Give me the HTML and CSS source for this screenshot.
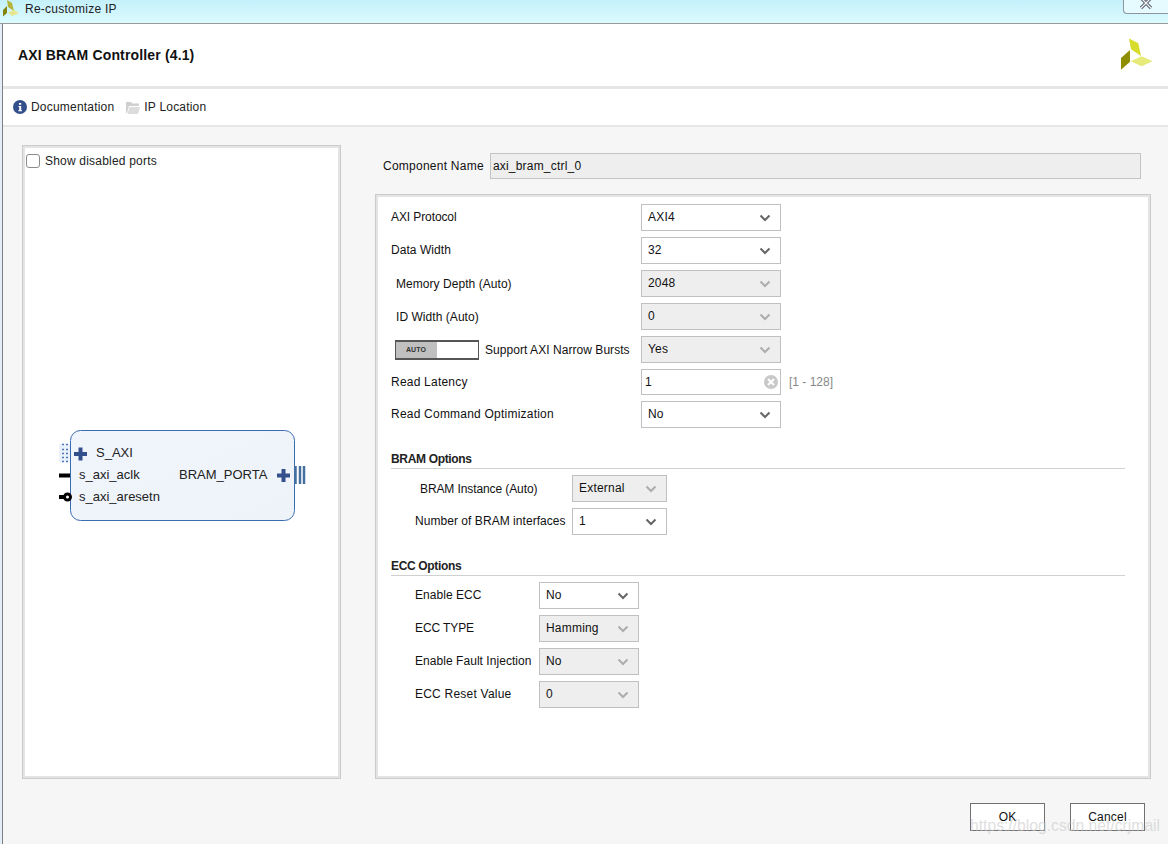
FILE: index.html
```html
<!DOCTYPE html>
<html lang="en">
<head>
    <meta charset="UTF-8">
    <title>Re-customize IP</title>
    <link rel="stylesheet" href="styles.css">
</head>
<body>
    <svg class="sprites" width="0" height="0">
        <symbol id="chev" viewBox="0 0 12 8">
            <path d="M1.5 1.5 6 6l4.5-4.5" fill="none" stroke="currentColor" stroke-width="2"/>
        </symbol>
    </svg>

    <div class="titlebar">
        <svg class="title-logo" width="20" height="17" viewBox="0 0 20 17">
            <path d="M7 0l5 3 2 8-6-4z" fill="#b5b43a"/>
            <path d="M8 12.500l6-2.500 5 3-7 3z" fill="#e6e68c"/>
            <path d="M3 10l4-4v7l-4 3.500z" fill="#84840f"/>
        </svg>
        <span class="title-text">Re-customize IP</span>
        <div class="close-btn">
            <svg width="14" height="10" viewBox="0 0 14 10">
                <path d="M2-2 12 8M12-2 2 8" stroke="#5a6270" stroke-width="3.200"/>
                <path d="M2-2 12 8M12-2 2 8" stroke="#f4f4f4" stroke-width="1.200"/>
            </svg>
        </div>
    </div>

    <div class="window">
        <div class="header">
            <h1 class="ip-title">AXI BRAM Controller (4.1)</h1>
            <svg class="ip-logo" width="34" height="34" viewBox="0 0 34 34">
                <path d="M9 1.500l9.300 4.700 2.700 12.700-10-6.700z" fill="#d8dc2c"/>
                <path d="M10.700 24.300l11-5 11 5-11 5z" fill="#e6ea78"/>
                <path d="M1 21l9-8v11.700l-9 8z" fill="#8e8e00"/>
            </svg>
        </div>

        <div class="toolbar">
            <a class="tool">
                <svg width="14" height="14" viewBox="0 0 14 14">
                    <circle cx="7" cy="7" r="7" fill="#34508c"/>
                    <path d="M6 3h2.200v1.800H6zM5.500 6h2.700v4.200h.8v1H5.300v-1h.9V7h-.7z" fill="#fff"/>
                </svg>
                Documentation
            </a>
            <a class="tool">
                <svg width="14" height="13" viewBox="0 0 14 13">
                    <path d="M0 1h5l1.500 1.500H13V5H3L1 12H0z" fill="#d0d0d0"/>
                    <path d="M3.500 6H14l-2 7H1.500z" fill="#dcdcdc"/>
                </svg>
                IP Location
            </a>
        </div>

        <div class="main">
            <div class="panel symbol-panel">
                <label class="show-ports"><span class="checkbox"></span>Show disabled ports</label>
                <svg class="symbol" width="260" height="100" viewBox="0 0 260 100">
                    <defs>
                        <linearGradient id="blockFill" x1="0" y1="0" x2="1" y2="1">
                            <stop offset="0" stop-color="#f0f5fc"/>
                            <stop offset="1" stop-color="#eef3fa"/>
                        </linearGradient>
                    </defs>
                    <path d="M-1 15h11v18H-1z" fill="#eaf1fa"/>
                    <path d="M2 15.500h2M6 15.500h2M2 32.500h2M6 32.500h2M2 20.500h2M6 20.500h2M2 24.500h2M6 24.500h2M2 28.500h2M6 28.500h2" stroke="#4c78b8" stroke-width="1.500" fill="none"/>
                    <rect x="10.500" y="1.500" width="224" height="90" rx="10" fill="url(#blockFill)" stroke="#3c6cb0"/>
                    <path d="M20.500 18.500v13M14 25h13" stroke="#34508c" stroke-width="4" fill="none"/>
                    <path d="M-1 46.500h11" stroke="#000" stroke-width="4"/>
                    <path d="M-1 68h6" stroke="#000" stroke-width="4"/>
                    <circle cx="7.500" cy="68" r="3" fill="#fff" stroke="#000" stroke-width="3"/>
                    <text class="port" x="36" y="28">S_AXI</text>
                    <text class="port" x="19" y="50">s_axi_aclk</text>
                    <text class="port" x="19" y="72">s_axi_aresetn</text>
                    <text class="port" x="119" y="50">BRAM_PORTA</text>
                    <path d="M223.500 40v13M217 46.500h13" stroke="#34508c" stroke-width="4" fill="none"/>
                    <path d="M235.500 37v18M240 37v18M244 37v18" stroke="#44709f" stroke-width="2.500"/>
                </svg>
            </div>

            <div class="config">
                <div class="name-row">
                    <label>Component Name</label>
                    <div class="name-input">axi_bram_ctrl_0</div>
                </div>

                <div class="panel form-panel">
                    <div class="rows rows-top">
                        <label class="tight">AXI Protocol</label>
                        <div class="combo"><span>AXI4</span><svg><use href="#chev"/></svg></div>
                        <label>Data Width</label>
                        <div class="combo"><span>32</span><svg><use href="#chev"/></svg></div>
                        <label class="auto-label">Memory Depth (Auto)</label>
                        <div class="combo off"><span>2048</span><svg><use href="#chev"/></svg></div>
                        <label class="auto-label">ID Width (Auto)</label>
                        <div class="combo off"><span>0</span><svg><use href="#chev"/></svg></div>
                        <label class="toggle-label">
                            <span class="toggle"><span class="toggle-on">AUTO</span></span>
                            Support AXI Narrow Bursts
                        </label>
                        <div class="combo off"><span>Yes</span><svg><use href="#chev"/></svg></div>
                        <label class="wide latency-label">Read Latency</label>
                        <div class="latency">
                            <div class="number-input">
                                <span>1</span>
                                <svg width="14" height="14" viewBox="0 0 14 14">
                                    <circle cx="7" cy="7" r="7" fill="#c8c8c8"/>
                                    <path d="M4 4l6 6M10 4l-6 6" stroke="#fff" stroke-width="2"/>
                                </svg>
                            </div>
                            <span class="range">[1 - 128]</span>
                        </div>
                        <label class="wide">Read Command Optimization</label>
                        <div class="combo"><span>No</span><svg><use href="#chev"/></svg></div>
                    </div>

                    <h2 class="section section-bram">BRAM Options</h2>
                    <div class="rows rows-bram">
                        <label class="auto-label tight">BRAM Instance (Auto)</label>
                        <div class="combo off"><span>External</span><svg><use href="#chev"/></svg></div>
                        <label>Number of BRAM interfaces</label>
                        <div class="combo"><span>1</span><svg><use href="#chev"/></svg></div>
                    </div>

                    <h2 class="section section-ecc">ECC Options</h2>
                    <div class="rows rows-ecc">
                        <label>Enable ECC</label>
                        <div class="combo"><span>No</span><svg><use href="#chev"/></svg></div>
                        <label class="tight">ECC TYPE</label>
                        <div class="combo off"><span>Hamming</span><svg><use href="#chev"/></svg></div>
                        <label>Enable Fault Injection</label>
                        <div class="combo off"><span>No</span><svg><use href="#chev"/></svg></div>
                        <label class="wide">ECC Reset Value</label>
                        <div class="combo off"><span>0</span><svg><use href="#chev"/></svg></div>
                    </div>
                </div>
            </div>
        </div>

        <div class="footer">
            <button class="btn">OK</button>
            <button class="btn">Cancel</button>
        </div>
    </div>

    <div class="watermark">https://blog.csdn.net/crjmail</div>
</body>
</html>
```

FILE: styles.css
```css
* {
    margin: 0;
    padding: 0;
    box-sizing: border-box;
}

body {
    width: 1168px;
    height: 844px;
    overflow: hidden;
    position: relative;
    display: flex;
    flex-direction: column;
    font-family: "Liberation Sans", Arial, sans-serif;
    font-size: 12px;
    color: #111;
    background-color: #e4eef8;
}

.sprites {
    position: absolute;
}

.titlebar {
    height: 24px;
    flex: none;
    display: flex;
    align-items: flex-start;
    background: linear-gradient(#c4f0fb, #dcfbff);
    border-bottom: 1px solid #9a9a9a;
}

.title-logo {
    margin-left: 0;
    flex: none;
}

.title-text {
    margin: 2px 0 0 5px;
    font-size: 12px;
    letter-spacing: 0.25px;
    color: #222;
}

.close-btn {
    margin-left: auto;
    width: 45px;
    height: 14px;
    display: flex;
    justify-content: center;
    overflow: hidden;
    border: 1px solid #8e959c;
    border-top: 0;
    border-right: 0;
    border-radius: 0 0 0 4px;
    background-color: #e6fbff;
}

.window {
    flex: 1;
    margin-left: 2px;
    display: flex;
    flex-direction: column;
    border-left: 1px solid #808080;
    background-color: #f6f6f6;
}

.header {
    height: 65px;
    flex: none;
    display: flex;
    align-items: center;
    justify-content: space-between;
    padding: 0 14px 0 15px;
    background-color: #fff;
    border-bottom: 3px solid #e6e6e6;
}

.ip-title {
    font-size: 14px;
    font-weight: bold;
    letter-spacing: 0.15px;
    color: #111;
    margin-bottom: 1px;
}

.ip-logo {
    margin-top: -2px;
}

.toolbar {
    height: 38px;
    flex: none;
    display: flex;
    align-items: center;
    gap: 12px;
    padding: 0 0 0 10px;
    background-color: #fff;
    border-bottom: 2px solid #e6e6e6;
}

.tool {
    display: flex;
    align-items: center;
    gap: 4px;
    letter-spacing: 0.2px;
    color: #222;
}

.main {
    height: 652px;
    flex: none;
    display: flex;
    gap: 34px;
    padding: 18px 17px 0 19px;
}

.panel {
    background-color: #fff;
    border: 1px solid #cbcbcb;
    box-shadow: inset 0 0 0 2px #e4e4e4;
}

.symbol-panel {
    width: 319px;
    height: 634px;
    flex: none;
    padding: 8px 0 0 3px;
}

.show-ports {
    display: flex;
    align-items: center;
    gap: 5px;
    letter-spacing: 0.2px;
    color: #222;
}

.checkbox {
    width: 14px;
    height: 14px;
    border: 1px solid #8a8a8a;
    border-radius: 3px;
    background-color: #fff;
}

.symbol {
    display: block;
    margin: 261px 0 0 34px;
    overflow: visible;
}

.port {
    font-size: 13px;
    fill: #222;
}

.config {
    flex: 1;
    display: flex;
    flex-direction: column;
}

.name-row {
    height: 49px;
    flex: none;
    display: flex;
    align-items: flex-start;
    gap: 6px;
    padding: 8px 10px 0 8px;
}

.name-row label {
    margin-top: 6px;
    letter-spacing: 0.25px;
}

.name-input {
    flex: 1;
    height: 26px;
    line-height: 24px;
    padding-left: 2px;
    border: 1px solid #c4c4c4;
    background-color: #eeeeee;
    letter-spacing: 0.2px;
}

.form-panel {
    height: 585px;
    padding: 9px 0 0 15px;
}

.rows {
    display: grid;
    row-gap: 6px;
    align-items: center;
}

.rows label {
    letter-spacing: 0.05px;
    margin-top: -2px;
}

.rows label.wide {
    letter-spacing: 0.22px;
}

.rows label.tight {
    letter-spacing: -0.1px;
}

.rows-top {
    grid-template-columns: 250px 140px;
}

.rows-bram {
    grid-template-columns: 157px 95px;
    padding-left: 24px;
}

.rows-ecc {
    grid-template-columns: 124px 100px;
    padding-left: 24px;
}

.rows label.auto-label {
    padding-left: 5px;
    margin-top: 0;
}

.rows label.latency-label {
    margin-top: 0;
}

.rows label.toggle-label {
    display: flex;
    align-items: center;
    gap: 6px;
    padding-left: 4px;
    margin-top: 0;
}

.toggle {
    width: 84px;
    height: 20px;
    flex: none;
    border: 2px solid #555;
    border-left-width: 1px;
    border-right-width: 1px;
    background-color: #fff;
}

.toggle-on {
    display: block;
    width: 41px;
    height: 100%;
    padding-left: 10px;
    font-size: 7px;
    font-weight: bold;
    line-height: 16px;
    color: #333;
    background-color: #c0c0c0;
}

.combo {
    height: 27px;
    display: flex;
    align-items: center;
    justify-content: space-between;
    padding: 0 9px 2px 6px;
    border: 1px solid #c0c0c0;
    background-color: #fff;
    color: #666;
    letter-spacing: 0.2px;
}

.combo span {
    color: #111;
}

.combo svg {
    width: 12px;
    height: 8px;
    margin-top: 3px;
}

.combo.off {
    background-color: #eeeeee;
    color: #adadad;
}

.latency {
    display: flex;
    align-items: center;
    gap: 8px;
    width: 240px;
}

.number-input {
    width: 140px;
    height: 26px;
    flex: none;
    display: flex;
    align-items: center;
    justify-content: space-between;
    padding: 0 2px 0 3px;
    border: 1px solid #c0c0c0;
    background-color: #fff;
}

.range {
    color: #888;
}

.section {
    margin-right: 25px;
    padding-bottom: 2px;
    border-bottom: 1px solid #d0d0d0;
    font-size: 12px;
    font-weight: bold;
    line-height: 14px;
    letter-spacing: -0.33px;
    color: #222;
}

.section-bram {
    margin-top: 24px;
    margin-bottom: 6px;
}

.section-ecc {
    margin-top: 24px;
    margin-bottom: 6px;
}

.footer {
    flex: 1;
    display: flex;
    justify-content: flex-end;
    align-items: flex-start;
    gap: 25px;
    padding: 24px 23px 0 0;
}

.btn {
    width: 75px;
    height: 28px;
    border: 1px solid #707070;
    background-color: #fff;
    font-family: inherit;
    font-size: 12px;
    letter-spacing: 0.2px;
    color: #111;
}

.watermark {
    position: absolute;
    left: 970px;
    top: 817px;
    font-size: 15.700px;
    color: rgba(200, 200, 200, 0.6);
    white-space: nowrap;
}
```
